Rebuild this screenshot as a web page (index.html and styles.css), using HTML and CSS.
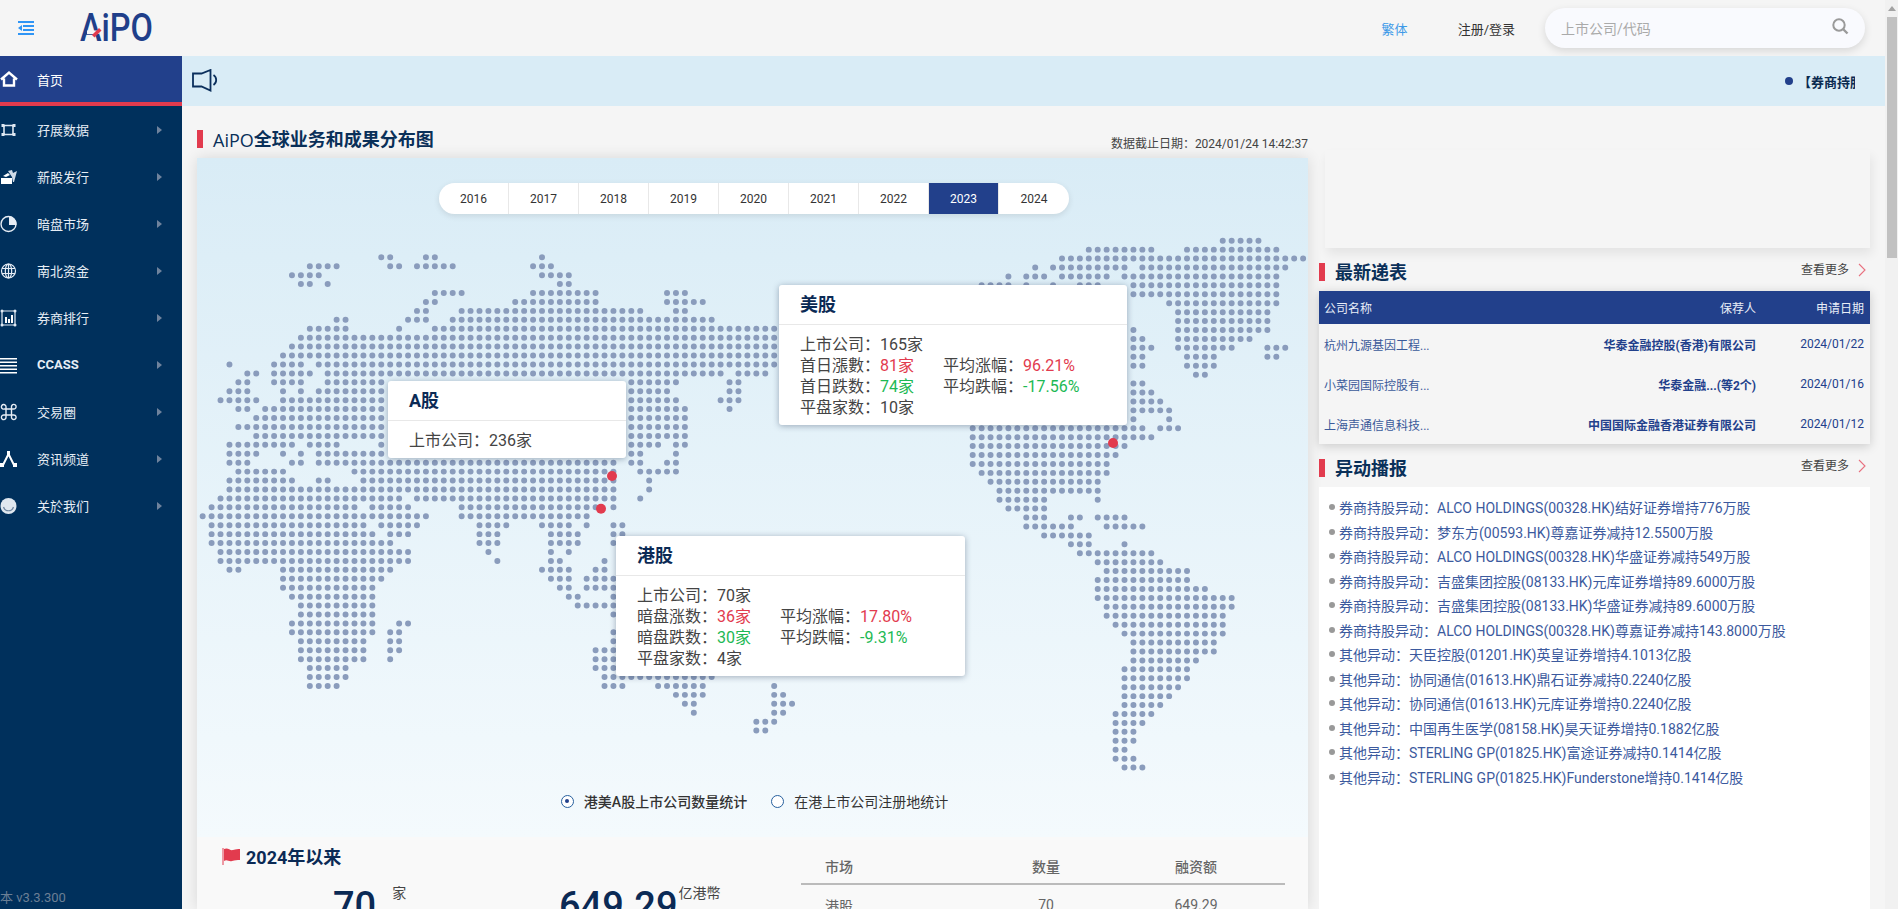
FILE: index.html
```html
<!DOCTYPE html>
<html lang="zh-CN">
<head>
<meta charset="utf-8">
<title>AiPO</title>
<link rel="stylesheet" href="styles.css">
</head>
<body>
<div class="page">
  <header class="topbar">
    <div class="brand">
      <svg class="menu-icon" viewBox="0 0 16 14" width="16" height="14"><path d="M0 0h16v2H0zM5 4h11v2H5zM5 8h11v2H5zM0 12h16v2H0zM0 7l4-3v6z" fill="#2f95f5"/></svg>
      <svg class="logo" viewBox="0 0 74 30" width="74" height="30"><text x="0" y="28" textLength="73" lengthAdjust="spacingAndGlyphs" class="logo-text">AiPO</text><path d="M7 17.500h12v3.500H7z" fill="#f5f5f5"/><path d="M12 22l7-7 2.500 2.500-7 7z" fill="#e23b4e"/></svg>
    </div>
    <div class="top-actions">
      <a class="lang">繁体</a>
      <a class="login">注册/登录</a>
      <div class="search">
        <span class="placeholder">上市公司/代码</span>
        <svg viewBox="0 0 17 17" width="17" height="17"><circle cx="7" cy="7" r="5.700" fill="none" stroke="#9a9a9a" stroke-width="2"/><path d="M11 11l4.500 4.500" stroke="#9a9a9a" stroke-width="2.400"/></svg>
      </div>
    </div>
  </header>
  <div class="main">
    <nav class="sidebar">
      <a class="nav-item active">
        <svg class="nav-icon" viewBox="0 0 18 18"><path d="M1 9.500l8-7 8 7M4 8.500v7h10v-7" fill="none" stroke="#fff" stroke-width="2.400"/></svg>
        <span>首页</span>
      </a>
      <a class="nav-item">
        <svg class="nav-icon" viewBox="0 0 18 18"><path d="M4 4.500h9v9H4z" fill="none" stroke="#dfe8f2" stroke-width="1.600"/><path d="M1.500 3h3v3h-3zM12.500 3h3v3h-3zM1.500 12h3v3h-3zM12.500 12h3v3h-3z" fill="#dfe8f2"/></svg>
        <span>孖展数据</span><i class="caret"></i>
      </a>
      <a class="nav-item">
        <svg class="nav-icon" viewBox="0 0 18 18"><path d="M1 10h11v6H1zM3 8l5-3 2 2-4 2z" fill="#fff"/><path d="M8 3l4-1 1 3 4-2-3 11h-1l-1-5z" fill="#cfdbe8"/></svg>
        <span>新股发行</span><i class="caret"></i>
      </a>
      <a class="nav-item">
        <svg class="nav-icon" viewBox="0 0 18 18"><circle cx="8.500" cy="9" r="7.500" fill="none" stroke="#e6edf5" stroke-width="1.400"/><path d="M9 1.500A7.500 7.500 0 0 1 16.500 10H9z" fill="#e6edf5"/></svg>
        <span>暗盘市场</span><i class="caret"></i>
      </a>
      <a class="nav-item">
        <svg class="nav-icon" viewBox="0 0 18 18"><g fill="none" stroke="#e6edf5" stroke-width="1.200"><circle cx="8.500" cy="9" r="7"/><ellipse cx="8.500" cy="9" rx="3.200" ry="7"/><path d="M8.500 2v14M2 6.500h13M2 11.500h13"/></g></svg>
        <span>南北资金</span><i class="caret"></i>
      </a>
      <a class="nav-item">
        <svg class="nav-icon" viewBox="0 0 18 18"><path d="M2 2h13v14H2z" fill="none" stroke="#dfe8f2" stroke-width="1.200"/><path d="M5 8h2v6H5zM8 10h2v4H8zM11 6h2v8h-2z" fill="#fff"/><g fill="#dfe8f2"><circle cx="2" cy="2" r="1.500"/><circle cx="15" cy="2" r="1.500"/><circle cx="2" cy="16" r="1.500"/><circle cx="15" cy="16" r="1.500"/></g></svg>
        <span>券商排行</span><i class="caret"></i>
      </a>
      <a class="nav-item">
        <svg class="nav-icon" viewBox="0 0 18 18"><path d="M0 2h17v1.600H0zM0 5.500h17v1.600H0zM0 9h17v1.600H0zM0 12.500h17v1.600H0zM0 16h17v1.600H0z" fill="#fff"/></svg>
        <span class="ccass">CCASS</span><i class="caret"></i>
      </a>
      <a class="nav-item">
        <svg class="nav-icon" viewBox="0 0 18 18"><path d="M6 6h5.500v6H6zM6 6H4.500a2.300 2.300 0 1 1 1.500-2zM11.500 6V4a2.300 2.300 0 1 1 2 2zM11.500 12h1.800a2.300 2.300 0 1 1-1.800 2zM6 12v2a2.300 2.300 0 1 1-2-2z" fill="none" stroke="#e6edf5" stroke-width="1.400"/></svg>
        <span>交易圈</span><i class="caret"></i>
      </a>
      <a class="nav-item">
        <svg class="nav-icon" viewBox="0 0 18 18"><path d="M3 15L8.500 4 14 15" fill="none" stroke="#fff" stroke-width="2"/><path d="M0 13h4v4H0zM13 13h4v4h-4zM7 1h3v4H7z" fill="#fff"/></svg>
        <span>资讯频道</span><i class="caret"></i>
      </a>
      <a class="nav-item">
        <svg class="nav-icon" viewBox="0 0 18 18"><circle cx="8.500" cy="9" r="8" fill="#dfe7ef"/><path d="M3.500 10a5.200 5.200 0 0 0 10 0" fill="none" stroke="#6f86a0" stroke-width="1.200"/></svg>
        <span>关於我们</span><i class="caret"></i>
      </a>
      <div class="version">本 v3.3.300</div>
    </nav>
    <main class="content">
      <div class="notice">
        <svg class="speaker" viewBox="0 0 26 24" width="26" height="24"><path d="M1 4.500h8.500L18.500 1v20.500l-9-4H1z" fill="none" stroke="#0b2f5c" stroke-width="1.800"/><path d="M21.500 6a6 6 0 0 1 0 10" fill="none" stroke="#0b2f5c" stroke-width="1.800"/></svg>
        <div class="ticker"><i class="ticker-dot"></i><div class="ticker-clip">【券商持股</div></div>
      </div>
      <div class="columns">
        <section class="left">
          <div class="head">
            <h2 class="head-title"><i class="bar"></i><span class="latin">AiPO</span>全球业务和成果分布图</h2>
            <span class="stamp">数据截止日期：2024/01/24 14:42:37</span>
          </div>
          <div class="card">
            <div class="map">
              <svg class="dots" viewBox="0 0 1111 679" width="1111" height="679">
                <g transform="translate(5.67 99.3) scale(8.93)"><path class="dotpath" d="M20 0h1.010M25 0h1.010M38 0h.01M12 1h3.010M21 1h1.010M24 1h4.010M37 1h2.010M10 2h3.010M38 2h3.010M11 3h1.010M14 3h.01M40 3h1.010M26 4h3.010M37 4h7.010M52 4h2.010M25 5h1.010M35 5h9.010M52 5h4.010M24 6h1.010M29 6h20.010M53 6h1.010M15 7h1.010M23 7h2.010M28 7h29.010M12 8h4.010M22 8h.01M26 8h38.010M11 9h53.010M10 10h54.010M9 11h55.010M3 12h.01M8 12h3.010M13 12h51.010M5 13h1.010M8 13h4.010M14 13h44.010M60 13h3.010M4 14h1.010M8 14h3.010M14 14h6.010M48 14h5.010M59 14h1.010M3 15h2.010M9 15h.01M11 15h.01M13 15h7.010M48 15h4.010M59 15h1.010M2 16h4.010M9 16h11.010M48 16h5.010M58 16h2.010M4 17h1.010M7 17h13.010M48 17h6.010M59 17h.01M6 18h14.010M48 18h6.010M4 19h16.010M48 19h6.010M6 20h14.010M48 20h6.010M3 21h7.010M12 21h3.010M20 21h.01M48 21h3.010M53 21h1.010M3 22h3.010M9 22h.01M11 22h.01M13 22h7.010M48 22h1.010M53 22h.01M3 23h2.010M10 23h1.010M13 23h33.010M48 23h1.010M52 23h1.010M4 24h5.010M17 24h29.010M49 24h4.010M3 25h7.010M13 25h1.010M18 25h28.010M50 25h.01M3 26h43.010M50 26h.01M2 27h20.010M24 27h22.010M49 27h.01M1 28h16.010M19 28h4.010M29 28h15.010M46 28h.01M0 29h25.010M29 29h14.010M1 30h17.010M20 30h4.010M31 30h3.010M38 30h3.010M43 30h.01M46 30h1.010M1 31h18.010M21 31h2.010M31 31h2.010M39 31h3.010M46 31h1.010M1 32h20.010M31 32h2.010M39 32h3.010M46 32h1.010M2 33h21.010M32 33h.01M39 33h.01M41 33h.01M2 34h21.010M33 34h.01M39 34h1.010M45 34h.01M3 35h1.010M9 35h12.010M38 35h3.010M44 35h1.010M9 36h11.010M39 36h2.010M43 36h3.010M9 37h10.010M40 37h1.010M43 37h3.010M10 38h9.010M41 38h1.010M46 38h.01M11 39h8.010M42 39h4.010M11 40h8.010M46 40h.01M10 41h9.010M22 41h1.010M10 42h9.010M21 42h1.010M46 42h.01M11 43h7.010M21 43h1.010M46 43h.01M11 44h7.010M21 44h1.010M44 44h2.010M11 45h7.010M21 45h.01M44 45h2.010M12 46h4.010M44 46h2.010M12 47h4.010M45 47h12.010M12 48h3.010M45 48h2.010M51 48h5.010M64 48h.01M53 49h3.010M64 49h1.010M54 50h1.010M64 50h2.010M55 51h.01M64 51h1.010M62 52h2.010M62 53h1.010"/></g>
                <g transform="translate(775.7 82.7) scale(8.93)"><path class="dotpath" d="M28 0h4.010M13 1h7.010M24 1h10.010M10 2h27.010M7 3h.01M9 3h8.010M19 3h16.010M4 4h.01M6 4h2.010M10 4h5.010M17 4h17.010M1 5h3.010M6 5h.01M9 5h.01M12 5h2.010M18 5h16.010M18 6h16.010M22 7h12.010M23 8h10.010M23 9h10.010M18 10h.01M23 10h10.010M18 11h1.010M23 11h8.010M18 12h2.010M23 12h6.010M33 12h2.010M18 13h1.010M24 13h3.010M33 13h1.010M18 14h1.010M24 14h3.010M25 15h1.010M18 16h1.010M18 17h2.010M18 18h3.010M18 19h4.010M18 20h.01M22 20h.01M0 21h19.010M21 21h2.010M0 22h20.010M0 23h17.010M0 24h16.010M0 25h15.010M1 26h14.010M2 27h12.010M3 28h11.010M3 29h5.010M14 29h.01M4 30h4.010M6 31h2.010M11 31h1.010M14 31h3.010M6 32h5.010M15 32h4.010M8 33h5.010M11 34h2.010M17 34h.01M12 35h8.010M14 36h7.010M15 37h9.010M14 38h10.010M14 39h12.010M14 40h15.010M15 41h14.010M15 42h13.010M16 43h12.010M17 44h11.010M18 45h9.010M18 46h9.010M18 47h7.010M17 48h7.010M17 49h7.010M17 50h6.010M17 51h5.010M17 52h4.010M16 53h4.010M16 54h3.010M16 55h2.010M16 56h2.010M16 57h1.010M16 58h2.010M17 59h2.010"/></g>
                <circle class="pin" cx="415" cy="318" r="5"/><circle class="pin" cx="404" cy="350.700" r="5"/><circle class="pin" cx="916" cy="285" r="5"/>
              </svg>
              <div class="years">
                <a class="year">2016</a><a class="year">2017</a><a class="year">2018</a><a class="year">2019</a><a class="year">2020</a><a class="year">2021</a><a class="year">2022</a><a class="year on">2023</a><a class="year">2024</a>
              </div>
              <div class="tip tip-a">
                <div class="tip-title">A股</div>
                <div class="tip-body"><div class="tip-row"><span class="cell"><b>上市公司：</b>236家</span></div></div>
              </div>
              <div class="tip tip-us">
                <div class="tip-title">美股</div>
                <div class="tip-body">
                  <div class="tip-row"><span class="cell"><b>上市公司：</b>165家</span></div>
                  <div class="tip-row"><span class="cell"><b>首日漲數：</b><em class="up">81家</em></span><span class="cell"><b>平均涨幅：</b><em class="up">96.21%</em></span></div>
                  <div class="tip-row"><span class="cell"><b>首日跌数：</b><em class="down">74家</em></span><span class="cell"><b>平均跌幅：</b><em class="down">-17.56%</em></span></div>
                  <div class="tip-row"><span class="cell"><b>平盘家数：</b>10家</span></div>
                </div>
              </div>
              <div class="tip tip-hk">
                <div class="tip-title">港股</div>
                <div class="tip-body">
                  <div class="tip-row"><span class="cell"><b>上市公司：</b>70家</span></div>
                  <div class="tip-row"><span class="cell"><b>暗盘涨数：</b><em class="up">36家</em></span><span class="cell"><b>平均涨幅：</b><em class="up">17.80%</em></span></div>
                  <div class="tip-row"><span class="cell"><b>暗盘跌数：</b><em class="down">30家</em></span><span class="cell"><b>平均跌幅：</b><em class="down">-9.31%</em></span></div>
                  <div class="tip-row"><span class="cell"><b>平盘家数：</b>4家</span></div>
                </div>
              </div>
              <div class="radios">
                <label class="radio strong"><i class="radio-mark checked"></i>港美A股上市公司数量统计</label>
                <label class="radio"><i class="radio-mark"></i>在港上市公司注册地统计</label>
              </div>
            </div>
            <div class="summary">
              <div class="summary-left">
                <h3 class="summary-title"><svg viewBox="0 0 20 18" width="20" height="18"><path d="M1 1v17" stroke="#e23b4e" stroke-width="1"/><path d="M2 2c4-2 6 2 9 1s5-1 7-1v11c-3 0-5 0-8 1s-5-2-8 0z" fill="#e23b4e"/></svg>2024年以来</h3>
                <div class="stats">
                  <div class="stat stat-count"><span class="num">70</span><span class="unit unit-far">家</span></div>
                  <div class="stat"><span class="num">649.29</span><span class="unit">亿港幣</span></div>
                </div>
              </div>
              <div class="summary-table">
                <div class="st-row st-head"><span class="st-market">市场</span><span>数量</span><span>融资额</span></div>
                <div class="st-row"><span class="st-market">港股</span><span>70</span><span>649.29</span></div>
              </div>
            </div>
          </div>
        </section>
        <aside class="right">
          <div class="blank"></div>
          <div class="side-head">
            <h2 class="head-title"><i class="bar"></i>最新递表</h2>
            <a class="more">查看更多<svg viewBox="0 0 8 14" width="8" height="14"><path d="M1 1l6 6-6 6" fill="none" stroke="#e8717f" stroke-width="1.100"/></svg></a>
          </div>
          <div class="filing">
            <div class="f-row f-head"><span>公司名称</span><span class="f-sponsor">保荐人</span><span class="f-date">申请日期</span></div>
            <div class="f-row"><span class="f-name">杭州九源基因工程...</span><span class="f-sponsor">华泰金融控股(香港)有限公司</span><span class="f-date">2024/01/22</span></div>
            <div class="f-row"><span class="f-name">小菜园国际控股有...</span><span class="f-sponsor">华泰金融...(等2个)</span><span class="f-date">2024/01/16</span></div>
            <div class="f-row"><span class="f-name">上海声通信息科技...</span><span class="f-sponsor">中国国际金融香港证券有限公司</span><span class="f-date">2024/01/12</span></div>
          </div>
          <div class="side-head side-head-2">
            <h2 class="head-title"><i class="bar"></i>异动播报</h2>
            <a class="more">查看更多<svg viewBox="0 0 8 14" width="8" height="14"><path d="M1 1l6 6-6 6" fill="none" stroke="#e8717f" stroke-width="1.100"/></svg></a>
          </div>
          <ul class="feed">
            <li>券商持股异动：ALCO HOLDINGS(00328.HK)结好证券增持776万股</li>
            <li>券商持股异动：梦东方(00593.HK)尊嘉证券减持12.5500万股</li>
            <li>券商持股异动：ALCO HOLDINGS(00328.HK)华盛证券减持549万股</li>
            <li>券商持股异动：吉盛集团控股(08133.HK)元库证券增持89.6000万股</li>
            <li>券商持股异动：吉盛集团控股(08133.HK)华盛证券减持89.6000万股</li>
            <li>券商持股异动：ALCO HOLDINGS(00328.HK)尊嘉证券减持143.8000万股</li>
            <li>其他异动：天臣控股(01201.HK)英皇证券增持4.1013亿股</li>
            <li>其他异动：协同通信(01613.HK)鼎石证券减持0.2240亿股</li>
            <li>其他异动：协同通信(01613.HK)元库证券增持0.2240亿股</li>
            <li>其他异动：中国再生医学(08158.HK)昊天证券增持0.1882亿股</li>
            <li>其他异动：STERLING GP(01825.HK)富途证券减持0.1414亿股</li>
            <li>其他异动：STERLING GP(01825.HK)Funderstone增持0.1414亿股</li>
          </ul>
        </aside>
      </div>
    </main>
  </div>
</div>
<div class="scrollbar"><i class="scroll-up"></i><i class="scroll-thumb"></i></div>
</body>
</html>
```
FILE: styles.css
```css
* { box-sizing: border-box; }
html, body { height: 100%; }
body {
  margin: 0;
  height: 909px;
  overflow: hidden;
  display: flex;
  background: #f5f5f5;
  color: #333;
  font-family: "Roboto", "Noto Sans CJK SC", sans-serif;
  font-size: 14px;
}
a { color: inherit; text-decoration: none; }
i, em { font-style: normal; }
b { font-weight: 400; }
h2, h3, ul { margin: 0; padding: 0; }

.page { flex: 1; min-width: 0; display: flex; flex-direction: column; }

/* scrollbar */
.scrollbar { width: 13px; background: #f1f1f1; padding: 6px 1px 0 2px; display: flex; flex-direction: column; align-items: stretch; }
.scroll-up { width: 0; height: 0; margin: 0 auto 6px; border: 4px solid transparent; border-top: 0; border-bottom: 5px solid #a3a3a3; }
.scroll-thumb { height: 241px; background: #c1c1c1; }

/* top bar */
.topbar { height: 56px; flex: none; display: flex; justify-content: space-between; align-items: center; padding-right: 20px; background: #f5f5f5; }
.brand { display: flex; align-items: center; padding-left: 18px; gap: 46px; }
.menu-icon { flex: none; margin-top: -1px; }
.logo { flex: none; margin-top: -1px; overflow: visible; }
.logo-text { font-family: "Roboto", sans-serif; font-size: 38px; font-weight: 500; fill: #1f3f8a; }
.top-actions { display: flex; align-items: center; }
.lang { color: #3d9ae8; font-size: 13px; margin-right: 50px; }
.login { color: #333; font-size: 13px; margin-right: 30px; }
.search { width: 320px; height: 40px; border-radius: 20px; background: #f9fafe; box-shadow: 0 3px 8px rgba(0,0,0,.12); display: flex; align-items: center; justify-content: space-between; padding: 0 16px; }
.placeholder { color: #aaa; font-size: 14px; }
.search svg { margin-top: -3px; }

/* layout */
.main { flex: 1; min-height: 0; display: flex; }

/* sidebar */
.sidebar { width: 182px; flex: none; background: #00305c; color: #e6edf5; display: flex; flex-direction: column; position: relative; }
.nav-item { height: 47px; flex: none; display: flex; align-items: center; font-size: 13px; padding-right: 20px; }
.nav-item span { flex: 1; }
.nav-icon { width: 18px; height: 18px; flex: none; margin-right: 19px; }
.nav-item.active { height: 50px; background: #22408b; border-bottom: 4px solid #e23b4e; color: #fff; }
.ccass { font-weight: 700; font-size: 13px; }
.caret { width: 0; height: 0; border-left: 5px solid #6f839d; border-top: 4.5px solid transparent; border-bottom: 4.5px solid transparent; }
.version { position: absolute; left: 0; bottom: 3px; font-size: 13px; color: #6b7f95; }

/* content */
.content { flex: 1; min-width: 0; display: flex; flex-direction: column; }
.notice { height: 50px; flex: none; background: #d9ecf6; display: flex; align-items: center; justify-content: space-between; padding-left: 10px; padding-right: 30px; }
.speaker { margin-top: -1px; }
.ticker { display: flex; align-items: center; font-size: 13px; font-weight: 700; color: #0a2a50; }
.ticker-dot { width: 8px; height: 8px; border-radius: 50%; background: #22408b; margin-right: 5px; }
.ticker-clip { width: 57px; overflow: hidden; white-space: nowrap; }

.columns { flex: 1; min-height: 0; display: flex; padding: 0 15px; gap: 11px; }
.left { width: 1111px; flex: none; padding-top: 24px; display: flex; flex-direction: column; }
.right { flex: 1; min-width: 0; padding-top: 44px; display: flex; flex-direction: column; }

.head { height: 18px; margin-bottom: 10px; display: flex; justify-content: space-between; align-items: flex-start; }
.head-title { display: flex; align-items: center; font-size: 18px; line-height: 20px; font-weight: 700; color: #0a3059; }
.latin { font-family: "Open Sans", sans-serif; font-weight: 500; }
.bar { width: 6px; height: 18px; background: #e23b4e; margin-right: 10px; flex: none; align-self: flex-start; }
.stamp { font-size: 12px; color: #444; padding-top: 4px; }

.card { flex: 1; min-height: 0; display: flex; flex-direction: column; box-shadow: 0 0 14px rgba(0,0,0,.12); overflow: hidden; }

/* map canvas */
.map { height: 679px; flex: none; position: relative; background: linear-gradient(#d9ecf6, #f4fafd); display: flex; flex-direction: column; justify-content: space-between; align-items: center; padding: 25px 0 26px; }
.dots { position: absolute; left: 0; top: 0; }
.dotpath { fill: none; stroke: #8a9cbc; stroke-width: .67; stroke-linecap: round; stroke-dasharray: 0 1; }
.pin { fill: #e23b4e; }

.years { position: relative; display: flex; height: 31px; border-radius: 16px; overflow: hidden; background: #fff; box-shadow: 0 2px 6px rgba(0,0,0,.1); margin-left: 3px; }
.year { width: 70px; display: flex; align-items: center; justify-content: center; font-size: 12px; color: #333; border-right: 1px solid #e8e8e8; }
.year:last-child { border-right: 0; }
.year.on { background: #22408b; color: #fff; }

.tip { position: absolute; background: #fff; border-radius: 3px; box-shadow: 0 1px 6px rgba(40,60,90,.4); color: #444; }
.tip-a { left: 191px; top: 223px; width: 238px; height: 77px; }
.tip-us { left: 582px; top: 127px; width: 348px; height: 140px; }
.tip-hk { left: 419px; top: 378px; width: 349px; height: 140px; }
.tip-title { height: 40px; line-height: 40px; padding-left: 21px; font-size: 18px; font-weight: 700; color: #0b2a55; border-bottom: 1px solid #e8e8e8; }
.tip-body { padding: 9px 0 0 21px; font-size: 16px; line-height: 21px; }
.tip-row { display: flex; white-space: nowrap; }
.cell { width: 143px; }
.up { color: #e23b4e; }
.down { color: #1db954; }

.radios { position: relative; display: flex; align-items: center; gap: 24px; font-size: 14px; color: #333; padding-left: 4px; }
.radio { display: flex; align-items: center; }
.radio.strong { font-weight: 500; }
.radio-mark { width: 13px; height: 13px; border-radius: 50%; border: 1.5px solid #27609e; margin-right: 10px; background: #fff; position: relative; }
.radio-mark.checked::after { content: ""; position: absolute; left: 3px; top: 3px; width: 4px; height: 4px; border-radius: 50%; background: #22408b; }

/* summary */
.summary { flex: 1; min-height: 0; background: #f9f9f9; display: flex; }
.summary-left { width: 604px; flex: none; padding: 9px 0 0 25px; }
.summary-title { display: flex; align-items: center; gap: 4px; height: 20px; font-size: 18px; font-weight: 700; color: #0b2a55; }
.stats { display: flex; margin: 20px 0 0 111px; }
.stat { display: flex; align-items: flex-start; }
.stat-count { width: 226px; }
.num { font-size: 38px; line-height: 40px; font-weight: 500; color: #0b2a55; }
.unit { font-size: 14px; line-height: 14px; color: #444; margin-left: 1px; }
.unit-far { margin-left: 16px; }
.summary-table { width: 484px; flex: none; }
.st-row { display: grid; grid-template-columns: 170px 150px 150px; height: 40px; align-items: center; color: #666; font-size: 14px; text-align: center; }
.st-head { margin-top: 11px; height: 37px; border-bottom: 2px solid #bbb; font-weight: 500; }
.st-market { text-align: left; padding-left: 24px; }

/* right column */
.blank { height: 98px; margin-left: 6px; flex: none; background: #f5f5f5; box-shadow: 2px 6px 10px rgba(0,0,0,.07); }
.side-head { height: 18px; margin: 15px 0 10px; display: flex; justify-content: space-between; align-items: flex-start; }
.more { font-size: 12px; color: #444; display: flex; align-items: center; gap: 9px; line-height: 14px; padding-right: 4px; }
.filing { flex: none; background: #f5f5f5; box-shadow: 0 2px 10px rgba(0,0,0,.18); height: 153px; }
.f-row { height: 40px; display: flex; align-items: center; padding: 0 6px 0 5px; font-size: 12px; color: #22408b; }
.f-head { height: 33px; background: #22408b; color: #e9eef7; }
.f-row span:first-child { flex: 1; }
.f-name { color: #3b5a9a; }
.f-sponsor { text-align: right; font-weight: 700; }
.f-head .f-sponsor { font-weight: 400; }
.f-date { width: 108px; text-align: right; }
.side-head-2 { margin-top: 15px; }
.feed { flex: 1; min-height: 0; background: #fff; list-style: none; padding: 9px 0 0 20px; font-size: 14px; line-height: 24.5px; color: #3c5a9e; }
.feed li { position: relative; white-space: nowrap; }
.feed li::before { content: ""; position: absolute; left: -10px; top: 8px; width: 6px; height: 6px; border-radius: 50%; background: #999; }
```
